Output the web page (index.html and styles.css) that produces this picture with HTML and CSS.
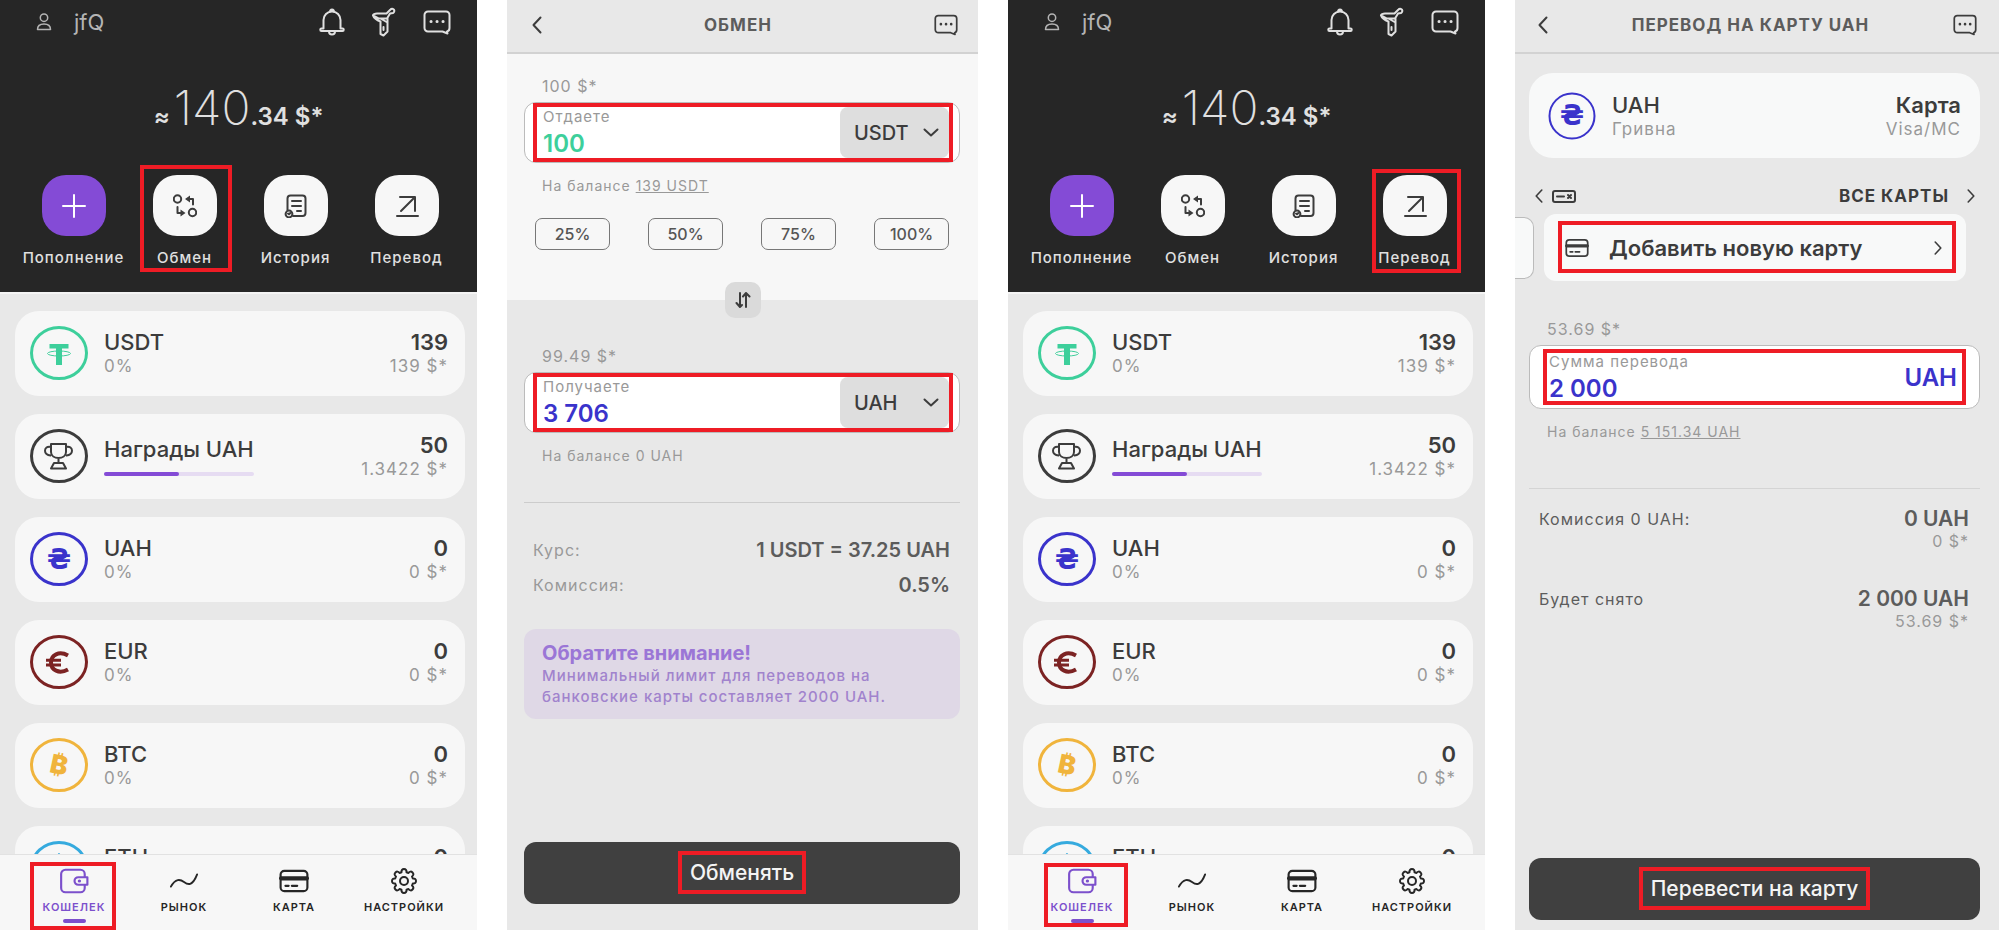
FILE: index.html
```html
<!DOCTYPE html>
<html lang="ru">
  <head>
    <meta charset="utf-8" />
    <title>Кошелек</title>
    <meta name="viewport" content="width=device-width,initial-scale=1" />
    <link rel="stylesheet" href="styles.css">
  </head>

  <body>
    <svg class="sprite" aria-hidden="true">
      <symbol id="user" viewBox="0 0 16 18">
        <circle cx="8" cy="4.7" r="3.7" />
        <path d="M1.5 16.5c0-4 3-5.5 6.500-5.500s6.500 1.500 6.500 5.500z" />
      </symbol>
      <symbol id="bell" viewBox="0 0 26 28">
        <path d="M4.500 20.500V12a8.500 8.500 0 0 1 17 0v8.500M4.500 20.500H2.500a1.200 1.200 0 0 0 0 2.500h21a1.200 1.200 0 0 0 0-2.500h-2M10 23.500c0 4 6 4 6 0M11 4c0-3.500 4-3.500 4 0" />
      </symbol>
      <symbol id="funnel" viewBox="0 0 26 30">
        <path d="M6 6.500h9.500l4-4a2.200 2.200 0 1 1 2.500 3.500l-3 .5-3 5H7.500L2 8.500c-.5-1 2-2 4-2zM2 8.500c1 3 3 4.500 7.500 6V27l3 1.500 4-4V11.500M9.500 11.500l7 4M12.500 20v3" />
      </symbol>
      <symbol id="chat" viewBox="0 0 28 25">
        <path d="M5 1.500h18a3.500 3.500 0 0 1 3.500 3.500v13a3.500 3.500 0 0 1-2.500 3.500l.5 2-5-2H5A3.500 3.500 0 0 1 1.500 18V5A3.500 3.500 0 0 1 5 1.500z" />
        <path class="dots" d="M8 11.500h.1M14 11.500h.1M20 11.500h.1" />
      </symbol>
      <symbol id="plus" viewBox="0 0 24 24">
        <path d="M1 12h22M12 1v22" />
      </symbol>
      <symbol id="exchange" viewBox="0 0 24 24">
        <circle cx="4.500" cy="5" r="3.700" />
        <circle cx="19.500" cy="18.500" r="3.700" />
        <path d="M20 10.500V5h-4M4.500 13v6h4" />
        <path class="solid" d="M12 5l5-3.500v7zM12.500 19l-5-3.500v7z" />
      </symbol>
      <symbol id="history" viewBox="0 0 24 24">
        <path d="M3.500 16V4.500a3 3 0 0 1 3-3h12a3 3 0 0 1 3 3V19a3 3 0 0 1-3 3H9M8 7h9M8 12h9M13 17h4" />
        <circle cx="5" cy="20" r="3.400" />
        <path d="M4 19.500l1 .8 1.300-1.300" />
      </symbol>
      <symbol id="transfer" viewBox="0 0 24 24">
        <path d="M5 3h15v14M20 3L6 17M2 22h21" />
      </symbol>
      <symbol id="wallet" viewBox="0 0 28 24">
        <path d="M24 7.500V5.500a4 4 0 0 0-4-4H6a4 4 0 0 0-4 4v13a4 4 0 0 0 4 4h14a4 4 0 0 0 4-4v-2M26.500 8.500v7H18a3.500 3.500 0 0 1 0-7z" />
        <path class="dots" d="M19 12h.1" />
      </symbol>
      <symbol id="market" viewBox="0 0 32 18">
        <path d="M2 15C7 6 12 7 16 10s9 5 14-8" />
      </symbol>
      <symbol id="card" viewBox="0 0 28 22">
        <rect x="1.500" y="1.500" width="25" height="19" rx="3.500" />
        <path class="band" d="M2 8.500h24" />
        <path d="M6 15.500h3M12 15.500h5" />
      </symbol>
      <symbol id="gear" viewBox="0 0 28 28">
        <circle cx="14" cy="14" r="4" />
        <path d="M11.500 5.200Q11.300 2 14 2t2.500 3.200l2 .8q2-2.500 4-.5t-.5 4l.8 2Q26 11.300 26 14t-3.200 2.500l-.8 2q2.500 2 .5 4t-4-.5l-2 .8Q16.700 26 14 26t-2.500-3.200l-2-.8q-2 2.500-4 .5t.5-4l-.8-2Q2 16.700 2 14t3.200-2.500l.8-2q-2.500-2-.5-4t4 .5z" />
      </symbol>
      <symbol id="left" viewBox="0 0 10 18">
        <path d="M8.500 1.500L1.500 9l7 7.500" />
      </symbol>
      <symbol id="right" viewBox="0 0 10 18">
        <path d="M1.500 1.500l7 7.500-7 7.500" />
      </symbol>
      <symbol id="down" viewBox="0 0 16 10">
        <path d="M1.500 1.500L8 7.500l6.500-6" />
      </symbol>
      <symbol id="swap" viewBox="0 0 16 16">
        <path d="M5 1v14M1.500 11L5 15M11 15V1M8 4.500L11 1l3.500 3.500M5 15l2-2" />
      </symbol>
      <symbol id="ticket" viewBox="0 0 24 13">
        <rect x="1" y="1" width="22" height="11" rx="2" />
        <path d="M5 6.500h7M16 5l3 3M19 5l-3 3" />
      </symbol>
      <symbol id="coin-usdt" viewBox="0 0 58 54">
        <ellipse cx="29" cy="27" rx="27.500" ry="25.500" />
        <path class="fill" d="M19.500 18h19v4.500h-6.500V39h-6V22.500h-6.500z" />
        <ellipse class="thin" cx="29" cy="27.500" rx="11.500" ry="2.500" />
      </symbol>
      <symbol id="coin-rewards" viewBox="0 0 58 54">
        <ellipse cx="29" cy="27" rx="27.500" ry="25.500" />
        <path class="mid" d="M21 15h15v8c0 8-15 8-15 0zM21 18c-8-2-8 9 0 8.500M36 18c8-2 8 9 0 8.500M28.500 29v5M24 34h9l3 5.500H21z" />
      </symbol>
      <symbol id="coin-uah" viewBox="0 0 58 54">
        <ellipse cx="29" cy="27" rx="27.500" ry="25.500" />
        <text x="29" y="37">₴</text>
      </symbol>
      <symbol id="coin-uah-round" viewBox="0 0 48 48">
        <circle cx="24" cy="24" r="22.500" />
        <text x="24" y="33">₴</text>
      </symbol>
      <symbol id="coin-eur" viewBox="0 0 58 54">
        <ellipse cx="29" cy="27" rx="27.500" ry="25.500" />
        <path class="euro" d="M38 20.500C29 15.500 21 20 21 27.500s8 12 17 7" />
        <path class="euro-bars" d="M16 25.200h15M16 30h15" />
      </symbol>
      <symbol id="coin-btc" viewBox="0 0 58 54">
        <ellipse cx="29" cy="27" rx="27.500" ry="25.500" />
        <text class="bold-glyph" x="29" y="36" transform="rotate(12 29 27)">₿</text>
      </symbol>
      <symbol id="coin-eth" viewBox="0 0 58 54">
        <ellipse cx="29" cy="27" rx="27.500" ry="25.500" />
        <path class="mid" d="M29 13l8 14-8 5-8-5zM21 30l8 11 8-11" />
      </symbol>
    </svg>

    <main class="screens">
      <section class="screen home">
        <header class="hero">
          <div class="topbar">
            <a class="profile" href="#profile"><svg class="icon icon-user"><use href="#user" /></svg>jfQ</a>
            <div class="tools">
              <button aria-label="Уведомления"><svg class="icon icon-bell"><use href="#bell" /></svg></button>
              <button aria-label="Фильтр"><svg class="icon icon-funnel"><use href="#funnel" /></svg></button>
              <button aria-label="Чат"><svg class="icon icon-chat"><use href="#chat" /></svg></button>
            </div>
          </div>
          <div class="balance"><span class="approx">≈</span><strong>140</strong><span>.34 $*</span></div>
          <div class="actions">
            <button class="action primary"><span class="tile"><svg class="icon icon-tile"><use href="#plus" /></svg></span>Пополнение</button>
            <button class="action marked mark-exchange"><span class="tile"><svg class="icon icon-tile"><use href="#exchange" /></svg></span>Обмен</button>
            <button class="action"><span class="tile"><svg class="icon icon-tile"><use href="#history" /></svg></span>История</button>
            <button class="action"><span class="tile"><svg class="icon icon-tile"><use href="#transfer" /></svg></span>Перевод</button>
          </div>
        </header>

        <ul class="assets">
          <li class="asset">
            <svg class="coin usdt"><use href="#coin-usdt" /></svg>
            <div class="name"><b>USDT</b><span>0%</span></div>
            <div class="sum"><b>139</b><span>139 $*</span></div>
          </li>
          <li class="asset">
            <svg class="coin rewards"><use href="#coin-rewards" /></svg>
            <div class="name"><b>Награды UAH</b><progress value="50" max="100" aria-label="Награды UAH"></progress></div>
            <div class="sum"><b>50</b><span>1.3422 $*</span></div>
          </li>
          <li class="asset">
            <svg class="coin uah"><use href="#coin-uah" /></svg>
            <div class="name"><b>UAH</b><span>0%</span></div>
            <div class="sum"><b>0</b><span>0 $*</span></div>
          </li>
          <li class="asset">
            <svg class="coin eur"><use href="#coin-eur" /></svg>
            <div class="name"><b>EUR</b><span>0%</span></div>
            <div class="sum"><b>0</b><span>0 $*</span></div>
          </li>
          <li class="asset">
            <svg class="coin btc"><use href="#coin-btc" /></svg>
            <div class="name"><b>BTC</b><span>0%</span></div>
            <div class="sum"><b>0</b><span>0 $*</span></div>
          </li>
          <li class="asset">
            <svg class="coin eth"><use href="#coin-eth" /></svg>
            <div class="name"><b>ETH</b><span>0%</span></div>
            <div class="sum"><b>0</b><span>0 $*</span></div>
          </li>
        </ul>

        <nav class="tabs">
          <a class="tab active marked mark-tab" href="#wallet-page"><svg class="icon icon-tab"><use href="#wallet" /></svg>КОШЕЛЕК</a>
          <a class="tab" href="#market-page"><svg class="icon icon-tab"><use href="#market" /></svg>РЫНОК</a>
          <a class="tab" href="#card-page"><svg class="icon icon-tab"><use href="#card" /></svg>КАРТА</a>
          <a class="tab" href="#settings-page"><svg class="icon icon-tab"><use href="#gear" /></svg>НАСТРОЙКИ</a>
        </nav>
      </section>

      <section class="screen exchange">
        <header class="bar">
          <button aria-label="Назад"><svg class="icon icon-back"><use href="#left" /></svg></button>
          <h1>ОБМЕН</h1>
          <button aria-label="Чат"><svg class="icon icon-chat small"><use href="#chat" /></svg></button>
        </header>

        <div class="give">
          <p class="rate">100 $*</p>
          <div class="field marked mark-give">
            <div class="amount">
              <label for="give">Отдаете</label>
              <input class="green" type="text" id="give" value="100">
            </div>
            <div class="currency">
              <select aria-label="Валюта списания"><option>USDT</option></select>
              <svg class="icon icon-down"><use href="#down" /></svg>
            </div>
          </div>
          <p class="hint">На балансе <a href="#max">139 USDT</a></p>
          <div class="percents">
            <button>25%</button>
            <button>50%</button>
            <button>75%</button>
            <button>100%</button>
          </div>
        </div>

        <button class="swap" aria-label="Поменять местами"><svg class="icon icon-swap"><use href="#swap" /></svg></button>

        <div class="get">
          <p class="rate">99.49 $*</p>
          <div class="field marked mark-get">
            <div class="amount">
              <label for="get">Получаете</label>
              <input class="blue" type="text" id="get" value="3 706">
            </div>
            <div class="currency">
              <select aria-label="Валюта зачисления"><option>UAH</option></select>
              <svg class="icon icon-down"><use href="#down" /></svg>
            </div>
          </div>
          <p class="hint">На балансе 0 UAH</p>
        </div>

        <dl class="details">
          <div><dt>Курс:</dt><dd>1 USDT = 37.25 UAH</dd></div>
          <div><dt>Комиссия:</dt><dd>0.5%</dd></div>
        </dl>

        <div class="notice">
          <h2>Обратите внимание!</h2>
          <p>Минимальный лимит для переводов на банковские карты составляет 2000 UAH.</p>
        </div>

        <button class="submit"><span class="marked mark-submit">Обменять</span></button>
      </section>

      <section class="screen home">
        <header class="hero">
          <div class="topbar">
            <a class="profile" href="#profile"><svg class="icon icon-user"><use href="#user" /></svg>jfQ</a>
            <div class="tools">
              <button aria-label="Уведомления"><svg class="icon icon-bell"><use href="#bell" /></svg></button>
              <button aria-label="Фильтр"><svg class="icon icon-funnel"><use href="#funnel" /></svg></button>
              <button aria-label="Чат"><svg class="icon icon-chat"><use href="#chat" /></svg></button>
            </div>
          </div>
          <div class="balance"><span class="approx">≈</span><strong>140</strong><span>.34 $*</span></div>
          <div class="actions">
            <button class="action primary"><span class="tile"><svg class="icon icon-tile"><use href="#plus" /></svg></span>Пополнение</button>
            <button class="action"><span class="tile"><svg class="icon icon-tile"><use href="#exchange" /></svg></span>Обмен</button>
            <button class="action"><span class="tile"><svg class="icon icon-tile"><use href="#history" /></svg></span>История</button>
            <button class="action marked mark-transfer"><span class="tile"><svg class="icon icon-tile"><use href="#transfer" /></svg></span>Перевод</button>
          </div>
        </header>

        <ul class="assets">
          <li class="asset">
            <svg class="coin usdt"><use href="#coin-usdt" /></svg>
            <div class="name"><b>USDT</b><span>0%</span></div>
            <div class="sum"><b>139</b><span>139 $*</span></div>
          </li>
          <li class="asset">
            <svg class="coin rewards"><use href="#coin-rewards" /></svg>
            <div class="name"><b>Награды UAH</b><progress value="50" max="100" aria-label="Награды UAH"></progress></div>
            <div class="sum"><b>50</b><span>1.3422 $*</span></div>
          </li>
          <li class="asset">
            <svg class="coin uah"><use href="#coin-uah" /></svg>
            <div class="name"><b>UAH</b><span>0%</span></div>
            <div class="sum"><b>0</b><span>0 $*</span></div>
          </li>
          <li class="asset">
            <svg class="coin eur"><use href="#coin-eur" /></svg>
            <div class="name"><b>EUR</b><span>0%</span></div>
            <div class="sum"><b>0</b><span>0 $*</span></div>
          </li>
          <li class="asset">
            <svg class="coin btc"><use href="#coin-btc" /></svg>
            <div class="name"><b>BTC</b><span>0%</span></div>
            <div class="sum"><b>0</b><span>0 $*</span></div>
          </li>
          <li class="asset">
            <svg class="coin eth"><use href="#coin-eth" /></svg>
            <div class="name"><b>ETH</b><span>0%</span></div>
            <div class="sum"><b>0</b><span>0 $*</span></div>
          </li>
        </ul>

        <nav class="tabs">
          <a class="tab active marked mark-tab-end" href="#wallet-page"><svg class="icon icon-tab"><use href="#wallet" /></svg>КОШЕЛЕК</a>
          <a class="tab" href="#market-page"><svg class="icon icon-tab"><use href="#market" /></svg>РЫНОК</a>
          <a class="tab" href="#card-page"><svg class="icon icon-tab"><use href="#card" /></svg>КАРТА</a>
          <a class="tab" href="#settings-page"><svg class="icon icon-tab"><use href="#gear" /></svg>НАСТРОЙКИ</a>
        </nav>
      </section>

      <section class="screen transfer">
        <header class="bar">
          <button aria-label="Назад"><svg class="icon icon-back"><use href="#left" /></svg></button>
          <h1>ПЕРЕВОД НА КАРТУ UAH</h1>
          <button aria-label="Чат"><svg class="icon icon-chat small"><use href="#chat" /></svg></button>
        </header>

        <div class="asset method">
          <svg class="coin uah"><use href="#coin-uah-round" /></svg>
          <div class="name"><b>UAH</b><span>Гривна</span></div>
          <div class="sum"><b>Карта</b><span>Visa/MC</span></div>
        </div>

        <div class="cards-head">
          <button aria-label="Предыдущая карта"><svg class="icon icon-step"><use href="#left" /></svg></button>
          <svg class="icon icon-ticket"><use href="#ticket" /></svg>
          <a class="all-cards" href="#cards">ВСЕ КАРТЫ<svg class="icon icon-step"><use href="#right" /></svg></a>
        </div>

        <div class="carousel">
          <div class="prev-card"></div>
          <button class="new-card marked mark-card">
            <svg class="icon icon-card"><use href="#card" /></svg>
            <span>Добавить новую карту</span>
            <svg class="icon icon-step"><use href="#right" /></svg>
          </button>
        </div>

        <div class="send">
          <p class="rate">53.69 $*</p>
          <div class="field marked mark-send">
            <div class="amount">
              <label for="send">Сумма перевода</label>
              <input class="blue" type="text" id="send" value="2 000">
            </div>
            <span class="unit">UAH</span>
          </div>
          <p class="hint">На балансе <a href="#max">5 151.34 UAH</a></p>
        </div>

        <dl class="totals">
          <div><dt>Комиссия 0 UAH:</dt><dd>0 UAH<small>0 $*</small></dd></div>
          <div><dt>Будет снято</dt><dd>2 000 UAH<small>53.69 $*</small></dd></div>
        </dl>

        <button class="submit"><span class="marked mark-submit">Перевести на карту</span></button>
      </section>
    </main>
  </body>
</html>
```
FILE: styles.css
```css
* {
  box-sizing: border-box;
}

body {
  margin: 0;
  background: #fff;
  color: #3c3c3c;
  font-family: Inter, 'Liberation Sans', sans-serif;
  font-size: 16px;
  line-height: 20px;
}

h1, h2, p, ul, dl, dd {
  margin: 0;
  padding: 0;
}

button, input, select {
  margin: 0;
  padding: 0;
  border: none;
  background: none;
  color: inherit;
  font: inherit;
}

button {
  cursor: pointer;
}

a {
  color: inherit;
  text-decoration: none;
}

.sprite {
  display: none;
}

.screens {
  display: grid;
  grid-template-columns: 477fr 471fr 477fr 484fr;
  gap: 30px;
  height: 100vh;
}

.screen {
  display: flex;
  flex-direction: column;
  min-width: 0;
  min-height: 0;
  overflow: hidden;
  background: #e8e8e8;
}

/* icons */
.icon {
  display: block;
  flex: none;
  fill: none;
  stroke: currentColor;
  stroke-width: 2;
  stroke-linecap: round;
  stroke-linejoin: round;
}

.dots { stroke-width: 3; }
.band { stroke-width: 4; }
.solid { fill: currentColor; stroke: none; }
.icon-user { width: 16px; height: 18px; stroke-width: 1.5; }
.icon-bell { width: 26px; height: 28px; }
.icon-funnel { width: 26px; height: 30px; }
.icon-chat { width: 28px; height: 25px; }
.icon-chat.small { width: 24px; height: 22px; }
.icon-tile { width: 24px; height: 24px; }
.icon-tab { width: 30px; height: 28px; }
.icon-back { width: 10px; height: 18px; }
.icon-step { width: 8px; height: 16px; }
.icon-down { width: 16px; height: 10px; }
.icon-swap { width: 16px; height: 16px; }
.icon-ticket { width: 24px; height: 13px; }
.icon-card { width: 24px; height: 20px; }

/* red frames around the steps */
.marked {
  position: relative;
}

.marked::after {
  content: '';
  position: absolute;
  border: 4px solid #ee1c25;
  pointer-events: none;
}

.mark-exchange::after { inset: -10px 8px -4px 11px; }
.mark-transfer::after { inset: -6px 9px -5px 13px; }
.mark-tab::after { inset: 7px 13px 0 11px; }
.mark-tab-end::after { inset: 8px 9px 3px 17px; }
.mark-give::after, .mark-get::after { inset: 0 6px 0 8px; }
.mark-card::after { inset: 7px 10px 8px 14px; }
.mark-send::after { inset: 3px 13px; }
.mark-submit::after { inset: -9px -12px; }

/* wallet */
.hero {
  flex: none;
  padding-bottom: 24px;
  border-bottom: 2px solid #f4f4f4;
  background: #262626;
  color: #e0e0e0;
}

.topbar {
  display: flex;
  align-items: center;
  justify-content: space-between;
  height: 44px;
  padding: 0 26px 0 36px;
}

.profile {
  display: flex;
  align-items: center;
  gap: 22px;
  color: #b4b4b4;
  font-size: 22px;
}

.tools {
  display: flex;
  align-items: center;
  gap: 26px;
}

.balance {
  display: flex;
  align-items: baseline;
  justify-content: center;
  height: 56px;
  margin-top: 36px;
  font-size: 24px;
  font-weight: 600;
  line-height: 56px;
}

.balance strong {
  font-size: 48px;
  font-weight: 200;
}

.approx {
  margin-right: 4px;
}

.actions {
  display: grid;
  grid-template-columns: repeat(4, 1fr);
  margin-top: 39px;
  padding: 0 15px 0 18px;
}

.action {
  display: flex;
  flex-direction: column;
  align-items: center;
  gap: 12px;
  font-size: 15px;
  font-weight: 500;
  letter-spacing: 1px;
}

.tile {
  display: grid;
  place-items: center;
  width: 64px;
  height: 61px;
  border-radius: 24px;
  background: #f7f7f7;
  color: #3c3c3c;
}

.primary .tile {
  background: #844bd6;
  color: #fff;
}

.assets {
  display: flex;
  flex: 1;
  flex-direction: column;
  gap: 18px;
  min-height: 0;
  padding: 17px 12px 0 15px;
  overflow: hidden;
  list-style: none;
}

.asset {
  display: flex;
  flex: none;
  align-items: center;
  gap: 16px;
  height: 85px;
  padding: 0 17px 2px 15px;
  border-radius: 24px;
  background: #f7f7f7;
}

.asset b {
  font-size: 22px;
  font-weight: 600;
  line-height: 26px;
}

.asset span {
  color: #999;
  font-size: 17px;
  letter-spacing: 1px;
  line-height: 22px;
}

.name {
  display: flex;
  flex-direction: column;
}

.name b {
  font-weight: 500;
}

.sum {
  display: flex;
  flex-direction: column;
  align-items: flex-end;
  margin-left: auto;
}

progress {
  appearance: none;
  width: 100%;
  height: 4px;
  margin-top: 10px;
  border: none;
}

progress::-webkit-progress-bar {
  border-radius: 2px;
  background: #e6dcf2;
}

progress::-webkit-progress-value {
  border-radius: 2px;
  background: #844bd6;
}

.coin {
  flex: none;
  width: 58px;
  height: 54px;
  fill: none;
  stroke: currentColor;
  stroke-width: 3;
  stroke-linejoin: round;
}

.thin { stroke-width: 1; }
.mid { stroke-width: 2; }
.fill { fill: currentColor; stroke: none; }
.euro { stroke-width: 4; }
.euro-bars { stroke-width: 3; }

symbol text {
  fill: currentColor;
  stroke: none;
  font-family: 'DejaVu Sans', sans-serif;
  font-size: 28px;
  font-weight: 700;
  text-anchor: middle;
}

symbol .bold-glyph {
  font-family: Inter, sans-serif;
  font-size: 26px;
  font-weight: 900;
}

.usdt { color: #3dcf9b; }
.rewards { color: #3c3c3c; }
.uah { color: #3a33cb; }
.eur { color: #7c2323; }
.btc { color: #f0b43c; }
.eth { color: #35aade; }

.tabs {
  display: grid;
  flex: none;
  grid-template-columns: repeat(4, 1fr);
  height: 76px;
  padding: 0 18px 0 19px;
  border-top: 1px solid #e2e2e2;
  background: #f7f7f7;
  color: #262626;
}

.tab {
  display: flex;
  flex-direction: column;
  align-items: center;
  gap: 5px;
  padding-top: 12px;
  font-size: 11px;
  font-weight: 600;
  letter-spacing: 1px;
  line-height: 14px;
}

.active {
  color: #7c50cc;
}

.active::before {
  content: '';
  order: 1;
  width: 23px;
  height: 4px;
  border-radius: 2px;
  background: currentColor;
}

/* exchange and transfer forms */
.bar {
  display: flex;
  flex: none;
  align-items: center;
  justify-content: space-between;
  height: 54px;
  padding: 0 20px 3px 25px;
  border-bottom: 2px solid #d2d2d2;
}

.bar h1 {
  color: #5c5c5c;
  font-size: 17px;
  font-weight: 700;
  letter-spacing: 1px;
}

.give {
  padding: 22px 18px 50px 17px;
  background: #f7f7f7;
}

.get {
  margin: 28px 18px 0 17px;
  padding-bottom: 36px;
  border-bottom: 1px solid #ccc;
}

.rate {
  margin: 0 18px 6px;
  color: #999;
  letter-spacing: 1px;
}

.field {
  display: flex;
  height: 61px;
  padding: 4px 10px 4px 18px;
  border: 1px solid #bbb;
  border-radius: 12px;
  background: #fff;
}

.amount {
  display: flex;
  flex: 1;
  flex-direction: column;
  gap: 4px;
  min-width: 0;
}

.amount label {
  color: #999;
  font-size: 15px;
  letter-spacing: 1px;
}

.amount input {
  width: 100%;
  outline: none;
  font-size: 24px;
  font-weight: 600;
  line-height: 26px;
}

.amount .green { color: #3dcf9b; }
.amount .blue { color: #3a33cb; }

.currency {
  display: grid;
  align-items: center;
  width: 109px;
  border-radius: 8px;
  background: #dedede;
}

.currency select,
.currency svg {
  grid-area: 1 / 1;
}

.currency select {
  appearance: none;
  height: 100%;
  padding-left: 14px;
  font-size: 20px;
  font-weight: 500;
}

.currency svg {
  justify-self: end;
  margin-right: 10px;
  pointer-events: none;
}

.hint {
  margin: 13px 18px 0;
  color: #999;
  font-size: 14px;
  letter-spacing: 1px;
}

.hint a {
  text-decoration: underline;
}

.percents {
  display: flex;
  justify-content: space-between;
  margin: 22px 11px 0;
}

.percents button {
  width: 75px;
  height: 32px;
  border: 1px solid #777;
  border-radius: 7px;
  color: #555;
  font-weight: 500;
}

.swap {
  display: grid;
  flex: none;
  place-items: center;
  align-self: center;
  width: 36px;
  height: 36px;
  margin: -18px 0 0;
  border-radius: 10px;
  background: #dadada;
}

.details {
  display: flex;
  flex-direction: column;
  gap: 11px;
  padding: 35px 28px 0 26px;
  line-height: 24px;
}

.details div,
.totals div {
  display: flex;
  justify-content: space-between;
}

.details dt {
  color: #999;
  letter-spacing: 1px;
}

.details dd {
  color: #5c5c5c;
  font-size: 20px;
  font-weight: 600;
}

.notice {
  margin: 32px 18px 0 17px;
  padding: 12px 18px;
  border-radius: 12px;
  background: #dfd8e6;
  color: #a183cd;
  line-height: 21px;
}

.notice h2 {
  color: #9b76d6;
  font-size: 20px;
  font-weight: 700;
  line-height: 24px;
}

.notice p {
  font-size: 15px;
  font-weight: 500;
  letter-spacing: 1px;
}

.submit {
  flex: none;
  height: 62px;
  margin: auto 18px 26px 17px;
  border-radius: 12px;
  background: #404040;
  color: #f4f4f4;
  font-size: 21px;
  font-weight: 500;
}

.transfer .submit {
  margin: auto 19px 10px 14px;
}

.transfer .bar {
  padding: 0 22px 3px 23px;
}

.method {
  margin: 19px 19px 0 14px;
  padding: 0 19px;
  background: #f8f9f9;
}

.method .coin {
  width: 48px;
  height: 48px;
  stroke-width: 2;
}

.cards-head {
  display: flex;
  align-items: center;
  gap: 9px;
  height: 24px;
  margin: 26px 24px 0 20px;
}

.all-cards {
  display: flex;
  align-items: center;
  gap: 18px;
  margin-left: auto;
  font-size: 17px;
  font-weight: 700;
  letter-spacing: 1px;
}

.carousel {
  display: flex;
  flex: none;
  align-items: center;
  gap: 10px;
  height: 67px;
  margin: 6px 33px 0 0;
}

.prev-card {
  width: 19px;
  height: 62px;
  border: 1px solid #bbb;
  border-left: none;
  border-radius: 0 10px 10px 0;
  background: #f8f9f9;
}

.new-card {
  display: flex;
  flex: 1;
  align-items: center;
  gap: 20px;
  height: 100%;
  padding: 0 24px 0 21px;
  border-radius: 12px;
  background: #f8f9f9;
  font-size: 22px;
  font-weight: 600;
}

.new-card .icon-step {
  margin-left: auto;
}

.send {
  margin: 38px 19px 0 14px;
  padding-bottom: 46px;
  border-bottom: 1px solid #d4d4d4;
}

.send .field {
  height: 64px;
  padding: 6px 22px 4px 19px;
}

.unit {
  align-self: center;
  color: #3a33cb;
  font-size: 24px;
  font-weight: 600;
}

.totals {
  display: flex;
  flex-direction: column;
  gap: 36px;
  padding: 18px 30px 0 24px;
  color: #5c5c5c;
  line-height: 24px;
}

.totals dt {
  letter-spacing: 1px;
}

.totals dd {
  font-size: 21px;
  font-weight: 600;
  text-align: right;
}

.totals small {
  display: block;
  color: #999;
  font-size: 16px;
  font-weight: 400;
  letter-spacing: 1px;
  line-height: 20px;
}
```
